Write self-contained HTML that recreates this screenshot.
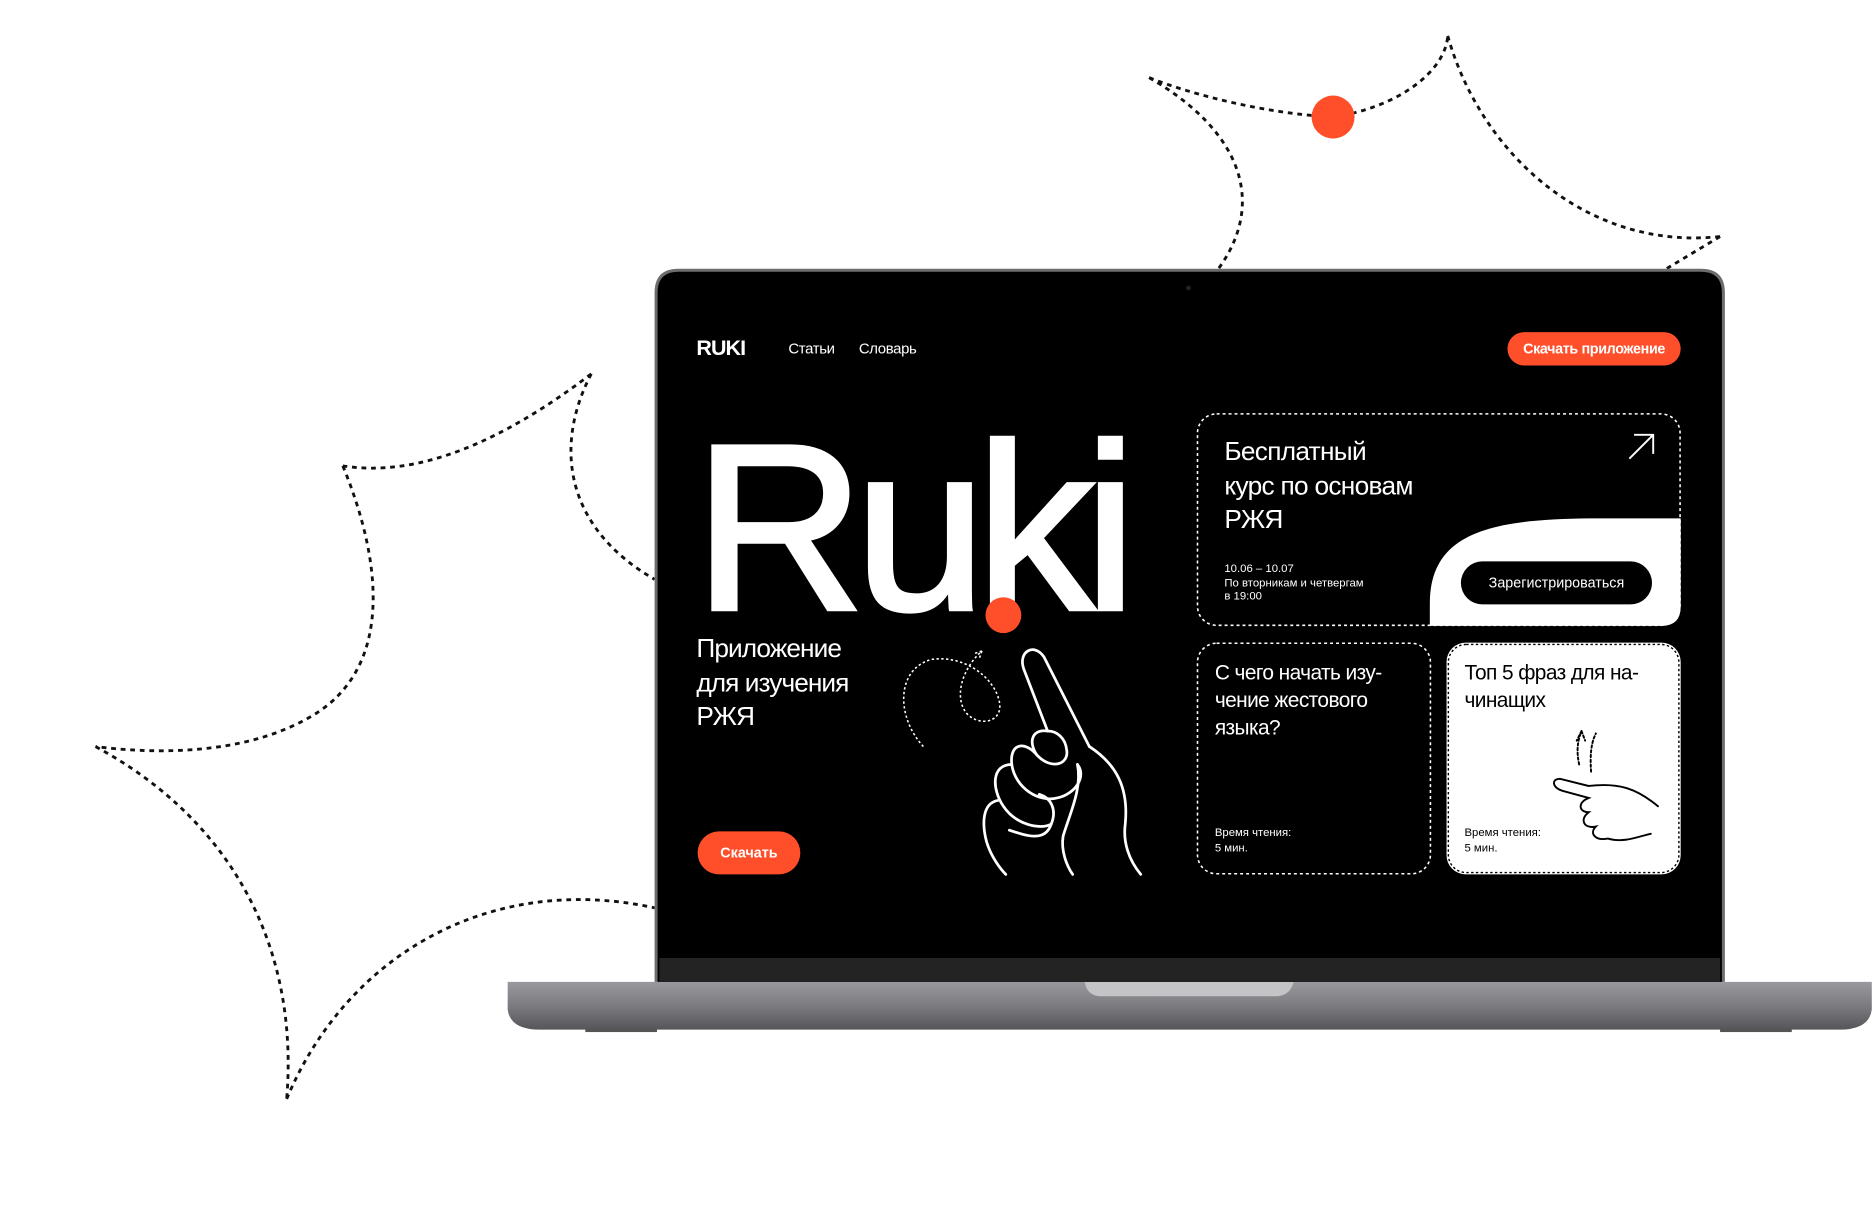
<!DOCTYPE html>
<html><head><meta charset="utf-8">
<style>
html,body{margin:0;padding:0;background:#fff;}
body{width:1873px;height:1227px;overflow:hidden;position:relative;font-family:"Liberation Sans","DejaVu Sans",sans-serif;}
#w{position:absolute;left:0;top:0;width:1568px;height:1027px;transform:scale(1.19451);transform-origin:0 0;}
.a{position:absolute;}
.t{color:#fff;white-space:nowrap;}
</style></head><body>
<div id="w">
<svg class="a" style="left:0;top:0" width="1568" height="1027">
 <g fill="none" stroke="#111" stroke-width="2.4" stroke-dasharray="4 4">
  <path d="M495,313 C420,370 350,400 287,390"/>
  <path d="M287,390 C320,470 330,560 260,600 C200,635 120,630 80,625"/>
  <path d="M80,625 C200,690 250,800 240,920"/>
  <path d="M240,920 C290,800 410,730 548,760"/>
  <path d="M495,313 C465,370 470,440 548,485"/>
  <path d="M962,65 C1000,80 1060,95 1116,98"/>
  <path d="M1116,98 C1170,90 1210,60 1212,30"/>
  <path d="M1212,30 C1240,130 1330,210 1440,198"/>
  <path d="M962,65 C1040,110 1060,170 1020,225"/>
  <path d="M1440,198 L1395,225"/>
 </g>
 <circle cx="1116" cy="98" r="18" fill="#FF4F2A"/>
 <defs><linearGradient id="bg" x1="0" y1="0" x2="0" y2="1"><stop offset="0" stop-color="#9a9a9e"/><stop offset="0.5" stop-color="#7c7c80"/><stop offset="1" stop-color="#55555a"/></linearGradient></defs>
 <path d="M425,822 L1567,822 L1567,845 Q1565,862 1540,862 L452,862 Q427,862 425,845 Z" fill="url(#bg)"/>
 <path d="M908,822 L1083,822 Q1080,834 1068,834 L922,834 Q910,834 908,822Z" fill="#c4c4c6"/>
 <rect x="490" y="861" width="60" height="3" fill="#555"/><rect x="1440" y="861" width="60" height="3" fill="#555"/>
 <path d="M548,822 L548,245 Q548,225 568,225 L1424,225 Q1444,225 1444,245 L1444,822 Z" fill="#6d6d70"/>
 <path d="M550.5,822 L550.5,245 Q550.5,227.5 568,227.5 L1424,227.5 Q1441.5,227.5 1441.5,245 L1441.5,822 Z" fill="#000"/>
 <rect x="552" y="802" width="888" height="20" fill="#232323"/>
 <circle cx="995" cy="241" r="2" fill="#222"/>
 <g fill="none" stroke="#fff" stroke-width="1.3" stroke-dasharray="2.5 2.5">
  <rect x="1002.5" y="346.5" width="404" height="177" rx="16"/>
  <rect x="1002.5" y="538.5" width="195" height="193" rx="16"/>
 </g>
 <path d="M1197,524 L1197,505 C1197,445 1250,435 1330,434 L1407,434 L1407,508 Q1407,524 1391,524 Z" fill="#fff"/>
 <rect x="1223" y="470" width="160" height="36" rx="18" fill="#000"/>
 <path d="M1364,384 L1384,364 M1368,364 L1384,364 L1384,380" stroke="#fff" stroke-width="1.6" fill="none"/>
 <rect x="1211" y="538" width="196" height="194" rx="16" fill="#fff"/>
 <rect x="1212.5" y="539.5" width="193" height="191" rx="15" fill="none" stroke="#000" stroke-width="1.2" stroke-dasharray="2 2"/>
 <g fill="none" stroke="#000" stroke-width="1.6" stroke-linecap="round">
  <path d="M1388,675 C1370,660 1355,655 1330,658 L1306,652 C1298,652 1300,660 1308,662 L1330,668 C1320,672 1322,680 1330,680 C1322,686 1326,694 1336,692 C1330,698 1336,704 1346,702 C1360,706 1372,700 1382,698"/>
  <path d="M1322,640 C1320,630 1320,622 1324,612 M1324,612 L1320,620 M1324,612 L1327,620" stroke-dasharray="2 2"/>
  <path d="M1332,646 C1331,632 1332,622 1336,614" stroke-dasharray="2 2"/>
 </g>
 <g fill="none" stroke="#fff" stroke-width="2.3" stroke-linecap="round" stroke-linejoin="round">
  <path d="M877,612 L857,560 C852,545 866,538 874,550 L912,625"/>
  <path d="M912,625 C935,640 945,660 942,690 C940,705 945,720 955,732"/>
  <path d="M877,612 C865,610 860,620 868,632 C880,645 895,640 893,628 C892,618 885,612 877,612Z"/>
  <path d="M868,632 C858,620 845,622 847,640 C850,660 870,672 885,668 C900,665 910,650 902,640"/>
  <path d="M847,640 C830,640 830,660 840,675 C850,690 870,695 880,690"/>
  <path d="M836,670 C822,672 822,690 826,705 C830,718 838,728 842,732"/>
  <path d="M845,695 C860,700 875,705 880,690 C885,678 880,668 870,665"/>
  <path d="M902,640 C906,660 896,680 890,700 C888,712 893,725 898,732"/>
 </g>
 <g fill="none" stroke="#fff" stroke-width="1.3" stroke-dasharray="2 2">
  <path d="M773,625 C750,600 750,560 780,552 C810,548 835,570 837,590 C838,605 820,608 810,598 C798,585 805,560 822,545"/>
  <path d="M822,545 L816,547 M822,545 L820,551"/>
 </g>
</svg>

<div class="a t" style="left:583px;top:281px;font-size:18px;font-weight:bold;letter-spacing:-0.8px">RUKI</div>
<div class="a t" style="left:660px;top:285px;font-size:12.5px;letter-spacing:-0.3px">Статьи</div>
<div class="a t" style="left:719px;top:285px;font-size:12.5px;letter-spacing:-0.3px">Словарь</div>
<div class="a t" style="left:1262px;top:278px;width:145px;height:28px;line-height:28px;border-radius:14px;background:#FF4F2A;text-align:center;font-size:12px;font-weight:bold;letter-spacing:-0.3px">Скачать приложение</div>

<div class="a t" style="left:581px;top:342px;font-size:198px;line-height:200px;font-weight:500;letter-spacing:-8.5px;-webkit-text-stroke:3.5px #fff">Ruki</div>
<svg class="a" style="left:0;top:0" width="1568" height="1027"><circle cx="840" cy="515" r="15" fill="#FF4F2A"/></svg>
<div class="a t" style="left:583px;top:529px;font-size:22px;line-height:28.5px;letter-spacing:-0.8px">Приложение<br>для изучения<br>РЖЯ</div>
<div class="a t" style="left:584px;top:696px;width:86px;height:36px;line-height:36px;border-radius:18px;background:#FF4F2A;text-align:center;font-size:12px;font-weight:bold">Скачать</div>

<div class="a t" style="left:1025px;top:364px;font-size:22px;line-height:28.5px;letter-spacing:-0.6px">Бесплатный<br>курс по основам<br>РЖЯ</div>
<div class="a t" style="left:1025px;top:471px;font-size:9.5px;line-height:11.5px">10.06 – 10.07<br>По вторникам и четвергам<br>в 19:00</div>
<div class="a t" style="left:1223px;top:470px;width:160px;height:36px;line-height:36px;text-align:center;font-size:12px">Зарегистрироваться</div>

<div class="a t" style="left:1017px;top:552px;font-size:17.5px;line-height:23px;letter-spacing:-0.5px">С чего начать изу-<br>чение жестового<br>языка?</div>
<div class="a t" style="left:1017px;top:691px;font-size:9.5px;line-height:13px">Время чтения:<br>5 мин.</div>
<div class="a t" style="left:1226px;top:552px;font-size:17.5px;line-height:23px;letter-spacing:-0.5px;color:#000">Топ 5 фраз для на-<br>чинащих</div>
<div class="a t" style="left:1226px;top:691px;font-size:9.5px;line-height:13px;color:#000">Время чтения:<br>5 мин.</div>
</div>
</body></html>
